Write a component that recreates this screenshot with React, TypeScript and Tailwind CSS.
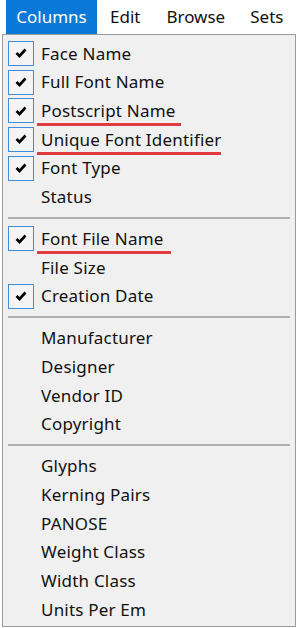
type Item = { label: string; checked?: boolean; mark?: number };

const groups: Item[][] = [
  [
    { label: "Face Name", checked: true },
    { label: "Full Font Name", checked: true },
    { label: "Postscript Name", checked: true, mark: 144 },
    { label: "Unique Font Identifier", checked: true, mark: 184 },
    { label: "Font Type", checked: true },
    { label: "Status" },
  ],
  [
    { label: "Font File Name", checked: true, mark: 134 },
    { label: "File Size" },
    { label: "Creation Date", checked: true },
  ],
  [
    { label: "Manufacturer" },
    { label: "Designer" },
    { label: "Vendor ID" },
    { label: "Copyright" },
  ],
  [
    { label: "Glyphs" },
    { label: "Kerning Pairs" },
    { label: "PANOSE" },
    { label: "Weight Class" },
    { label: "Width Class" },
    { label: "Units Per Em" },
  ],
];

function Check() {
  return (
    <svg width="12" height="10" viewBox="0 0 12 10">
      <path d="M1.5 5 L4.5 8 L10.5 1.5" fill="none" stroke="#000" strokeWidth="2.6" />
    </svg>
  );
}

function Row({ item }: { item: Item }) {
  return (
    <div className="relative flex h-[28.7px] items-center pl-[5px]">
      <div className="flex h-[25px] w-[26px] items-center justify-center">
        {item.checked && (
          <div className="flex h-[25px] w-[26px] items-center justify-center border border-[#3d8ddc] bg-[#f4f4f4]">
            <Check />
          </div>
        )}
      </div>
      <span className="ml-[7px] text-[17px] tracking-[0.2px] text-[#111]">{item.label}</span>
      {item.mark && (
        <div
          className="absolute left-[34px] top-[27px] h-[2.5px] bg-[#e03a3e]"
          style={{ width: item.mark }}
        />
      )}
    </div>
  );
}

export default function App() {
  return (
    <div className="h-[628px] w-[299px] bg-white font-['Noto_Sans',sans-serif]">
      <div className="flex h-[34px] items-center text-[17px] text-[#111]">
        <div className="ml-[6px] flex h-full w-[91px] items-center justify-center bg-[#0a78d7] text-white">
          Columns
        </div>
        <span className="ml-[13px]">Edit</span>
        <span className="ml-[26px]">Browse</span>
        <span className="ml-[25px]">Sets</span>
      </div>
      <div className="ml-[2px] flex h-[593px] w-[294px] flex-col border border-[#9a9a9a] bg-[#f0f0f0] pt-[4px]">
        {groups.map((g, gi) => (
          <div key={gi}>
            {gi > 0 && (
              <div className="flex h-[13.3px] items-center px-[5px]">
                <div className="h-[2px] w-full bg-[#b0b0b0]" />
              </div>
            )}
            {g.map((it) => (
              <Row key={it.label} item={it} />
            ))}
          </div>
        ))}
      </div>
    </div>
  );
}
